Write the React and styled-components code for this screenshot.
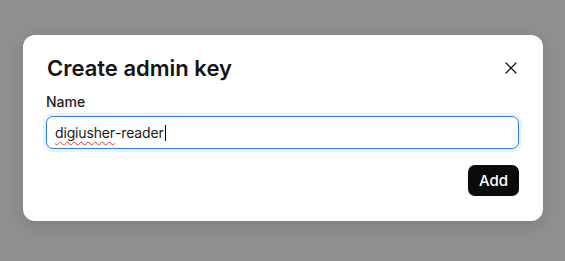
import React from "react";
import styled, { createGlobalStyle } from "styled-components";

const GlobalStyle = createGlobalStyle`
  html, body {
    margin: 0;
    padding: 0;
    background: #8f8f8e;
    font-family: Inter, "Noto Sans", sans-serif;
  }
`;

const Backdrop = styled.div`
  width: 565px;
  height: 261px;
  padding: 35px 22px 0 23px;
  box-sizing: border-box;
`;

const Dialog = styled.div`
  width: 520px;
  box-sizing: border-box;
  padding: 19px 24px 25px 23px;
  background: #ffffff;
  border-radius: 12px;
  box-shadow: 0 4px 14px rgba(0, 0, 0, 0.12);
  display: flex;
  flex-direction: column;
`;

const Header = styled.div`
  display: flex;
  align-items: center;
  justify-content: space-between;
`;

const Title = styled.h2`
  margin: 0 0 0 1px;
  font-size: 22px;
  line-height: 28px;
  font-weight: 600;
  color: #141414;
`;

const CloseButton = styled.button`
  border: none;
  background: transparent;
  padding: 0;
  margin-right: 1px;
  width: 14px;
  height: 14px;
  display: flex;
  align-items: center;
  justify-content: center;
  color: #1a1a1a;
  cursor: pointer;
`;

const Label = styled.label`
  margin-top: 10px;
  font-size: 14px;
  line-height: 20px;
  font-weight: 500;
  color: #1c1c1c;
`;

const Field = styled.div`
  margin-top: 4px;
  height: 33px;
  box-sizing: border-box;
  border: 1px solid #2f7fe3;
  border-radius: 7px;
  box-shadow: 0 0 0 3px rgba(59, 130, 246, 0.1);
  padding: 0 8px;
  display: flex;
  align-items: center;
  font-size: 14px;
  letter-spacing: -0.15px;
  color: #1a1a1a;
`;

const Misspelled = styled.span`
  text-decoration: underline wavy #e53935;
  text-decoration-thickness: 1px;
  text-underline-offset: 3px;
`;

const Caret = styled.span`
  display: inline-block;
  width: 1px;
  height: 16px;
  margin-left: 1px;
  background: #000;
`;

const Footer = styled.div`
  margin-top: 16px;
  display: flex;
  justify-content: flex-end;
`;

const AddButton = styled.button`
  height: 31px;
  padding: 0 11px;
  border: none;
  border-radius: 7px;
  background: #0b0b0b;
  color: #ffffff;
  font-family: Inter, "Noto Sans", sans-serif;
  font-size: 15px;
  font-weight: 500;
  cursor: pointer;
`;

export default function App() {
  return (
    <>
      <GlobalStyle />
      <Backdrop>
        <Dialog>
          <Header>
            <Title>Create admin key</Title>
            <CloseButton aria-label="Close">
              <svg width="12" height="12" viewBox="0 0 12 12">
                <path
                  d="M1 1L11 11M11 1L1 11"
                  stroke="currentColor"
                  strokeWidth="1.3"
                  strokeLinecap="round"
                />
              </svg>
            </CloseButton>
          </Header>
          <Label>Name</Label>
          <Field role="textbox">
            <Misspelled>digiusher</Misspelled>-reader
            <Caret />
          </Field>
          <Footer>
            <AddButton>Add</AddButton>
          </Footer>
        </Dialog>
      </Backdrop>
    </>
  );
}
